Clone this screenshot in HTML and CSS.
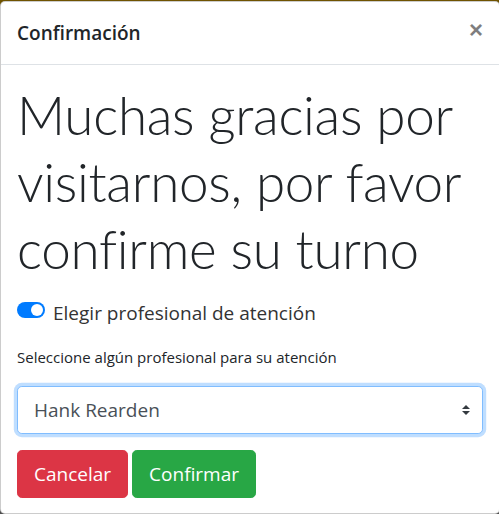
FILE: index.html
```html
<!DOCTYPE html>
<html lang="es">
<head>
<meta charset="utf-8">
<title>Confirmación</title>
<link rel="stylesheet" href="styles.css">
</head>
<body>
<div class="modal">
  <div class="modal-header">
    <h5 class="modal-title">Confirmación</h5>
    <button class="close" type="button" aria-label="Close">×</button>
  </div>
  <div class="modal-body">
    <h1 class="display">Muchas gracias por visitarnos, por favor confirme su turno</h1>
    <div class="switch-row">
      <span class="switch"><span class="knob"></span></span>
      <span class="switch-label">Elegir profesional de atención</span>
    </div>
    <label class="field-label">Seleccione algún profesional para su atención</label>
    <div class="select" role="listbox">
      <span class="select-value">Hank Rearden</span>
      <svg class="select-arrow" width="8" height="10" viewBox="0 0 4 5"><path d="M2 0L0 2h4zm0 5L0 3h4z" fill="#343a40"/></svg>
    </div>
    <div class="actions">
      <button class="btn btn-danger" type="button">Cancelar</button>
      <button class="btn btn-success" type="button">Confirmar</button>
    </div>
  </div>
</div>
</body>
</html>
```
FILE: styles.css
```css
* { box-sizing: border-box; }
html, body { margin: 0; padding: 0; }
body {
  width: 499px;
  height: 514px;
  overflow: hidden;
  background: linear-gradient(to bottom, #6f5300 0, #6f5300 28px, #4d4d4d 28px);
  font-family: "Open Sans", "Noto Sans", sans-serif;
  color: #212529;
}
.modal {
  margin-top: 1px;
  width: 500px;
  background: #fff;
  border: 1px solid rgba(0,0,0,.2);
  border-radius: 5px;
}
.modal-header {
  display: flex;
  align-items: flex-start;
  justify-content: space-between;
  padding: 16px;
  border-bottom: 1px solid #dee2e6;
}
.modal-title {
  margin: 0;
  font-size: 19px;
  font-weight: 600;
  line-height: 30px;
  color: #212529;
}
.close {
  padding: 16px;
  margin: -16px -16px -16px auto;
  background: transparent;
  border: 0;
  font-family: "Liberation Sans", Arial, sans-serif;
  font-size: 24px;
  font-weight: 700;
  line-height: 1;
  color: #000;
  opacity: .5;
  text-shadow: 0 1px 0 #fff;
  cursor: pointer;
}
.modal-body {
  padding: 16px 16px 15px;
}
.display {
  margin: 0 0 8px;
  font-family: Lato, "Open Sans", sans-serif;
  font-size: 53px;
  font-weight: 300;
  line-height: 67.2px;
  letter-spacing: -0.3px;
  color: #212529;
}
.switch-row {
  display: flex;
  align-items: flex-start;
  gap: 8px;
  margin-top: 15px;
  margin-bottom: 18px;
}
.switch {
  display: flex;
  justify-content: flex-end;
  align-items: center;
  width: 28px;
  height: 16px;
  margin-top: 4px;
  padding: 2px;
  border-radius: 8px;
  background: #007bff;
}
.knob {
  width: 12px;
  height: 12px;
  border-radius: 50%;
  background: #fff;
}
.switch-label {
  font-size: 19px;
  line-height: 30px;
  color: #333;
}
.field-label {
  display: block;
  margin-bottom: 18px;
  font-size: 15px;
  line-height: 22px;
  color: #212529;
}
.select {
  display: flex;
  align-items: center;
  justify-content: space-between;
  height: 48px;
  padding: 0 12px 0 16px;
  border: 1px solid #80bdff;
  border-radius: 4.8px;
  box-shadow: 0 0 0 3.2px rgba(0,123,255,.25);
  background: #fff;
  margin-bottom: 16px;
}
.select-value {
  font-size: 19px;
  line-height: 30px;
  color: #495057;
}
.actions {
  display: flex;
  gap: 4px;
}
.btn {
  font-family: inherit;
  font-size: 19px;
  line-height: 30px;
  padding: 8px 16px;
  border: 1px solid transparent;
  border-radius: 4.8px;
  color: #fff;
  cursor: pointer;
}
.btn-danger { background: #dc3545; border-color: #dc3545; }
.btn-success { background: #28a745; border-color: #28a745; }
```
